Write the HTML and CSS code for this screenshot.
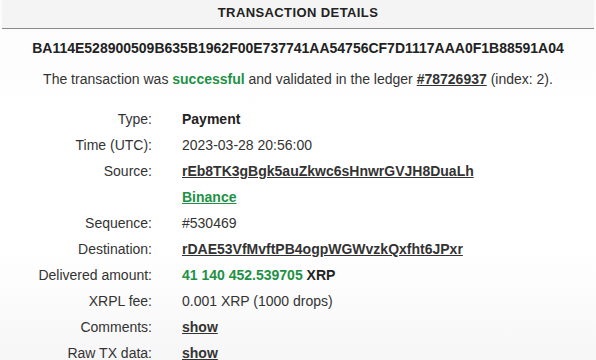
FILE: index.html
```html
<!DOCTYPE html>
<html>
<head>
<meta charset="utf-8">
<link rel="stylesheet" href="styles.css">
</head>
<body>
<div class="page">
  <div class="header">TRANSACTION DETAILS</div>
  <div class="hash">BA114E528900509B635B1962F00E737741AA54756CF7D1117AAA0F1B88591A04</div>
  <div class="status">The transaction was <b class="green">successful</b> and validated in the ledger <a class="link" href="#">#78726937</a> (index: 2).</div>
  <div class="details">
    <div class="label">Type:</div><div class="value"><b>Payment</b></div>
    <div class="label">Time (UTC):</div><div class="value">2023-03-28 20:56:00</div>
    <div class="label">Source:</div><div class="value"><a class="link" href="#">rEb8TK3gBgk5auZkwc6sHnwrGVJH8DuaLh</a></div>
    <div class="label"></div><div class="value"><a class="link green" href="#">Binance</a></div>
    <div class="label">Sequence:</div><div class="value">#530469</div>
    <div class="label">Destination:</div><div class="value"><a class="link" href="#">rDAE53VfMvftPB4ogpWGWvzkQxfht6JPxr</a></div>
    <div class="label">Delivered amount:</div><div class="value"><b class="green">41 140 452.539705</b> <b>XRP</b></div>
    <div class="label">XRPL fee:</div><div class="value">0.001 XRP (1000 drops)</div>
    <div class="label">Comments:</div><div class="value"><a class="link" href="#">show</a></div>
    <div class="label">Raw TX data:</div><div class="value"><a class="link" href="#">show</a></div>
  </div>
</div>
</body>
</html>
```
FILE: styles.css
```css
html, body {
  margin: 0;
  padding: 0;
}
body {
  width: 596px;
  height: 360px;
  overflow: hidden;
  font-family: "Liberation Sans", Arial, sans-serif;
  font-size: 14px;
  color: #333;
  background: linear-gradient(#fbfbfb 0px, #ffffff 120px, #ffffff 250px, #f6f6f6 360px);
}
.page {
  display: flex;
  flex-direction: column;
}
.header {
  margin: 0 2px;
  height: 28px;
  line-height: 25px;
  text-align: center;
  font-weight: bold;
  font-size: 13px;
  letter-spacing: 0.4px;
  color: #222;
  background: #f4f4f4;
  border-bottom: 1px solid #8a8a8a;
}
.hash {
  margin-top: 9px;
  text-align: center;
  font-weight: bold;
  font-size: 14px;
  line-height: 20px;
  color: #222;
}
.status {
  margin-top: 11px;
  text-align: center;
  line-height: 20px;
}
.green {
  color: #1e9145;
}
b {
  color: #222;
}
b.green {
  color: #1e9145;
}
.link {
  font-weight: bold;
  color: #333;
  text-decoration: underline;
}
.link.green {
  color: #1e9145;
}
.details {
  margin-top: 17px;
  display: grid;
  grid-template-columns: 152px 1fr;
  column-gap: 30px;
  grid-auto-rows: 26px;
  align-items: center;
}
.label {
  text-align: right;
}
```
